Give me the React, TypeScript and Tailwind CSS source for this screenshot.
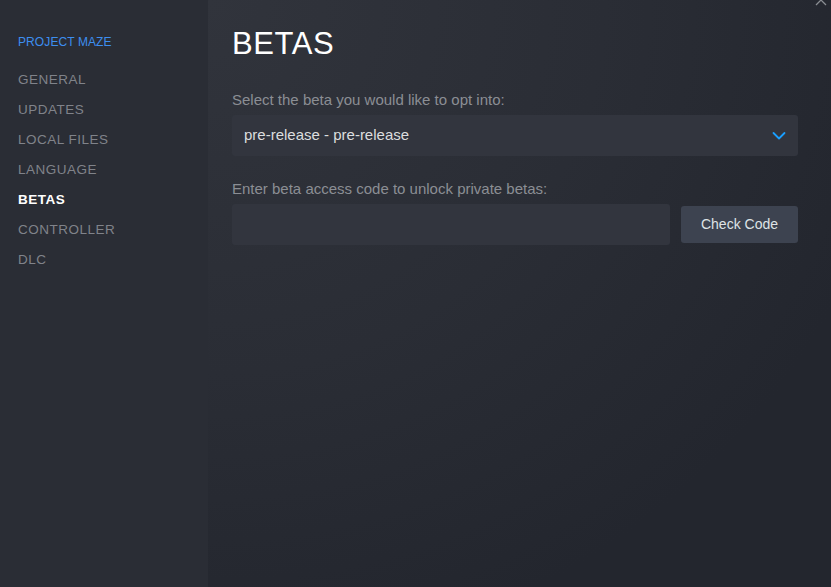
import { useState } from "react";

const sections = [
  "GENERAL",
  "UPDATES",
  "LOCAL FILES",
  "LANGUAGE",
  "BETAS",
  "CONTROLLER",
  "DLC",
];

function Chevron() {
  return (
    <svg width="14" height="14" viewBox="0 0 14 14" fill="none">
      <path
        d="M1.5 4 L7 9.5 L12.5 4"
        stroke="#1a9fff"
        strokeWidth="1.8"
        strokeLinecap="round"
        strokeLinejoin="round"
      />
    </svg>
  );
}

export default function App() {
  const [active, setActive] = useState("BETAS");
  const [code, setCode] = useState("");

  return (
    <div className="flex h-[587px] w-[831px] overflow-hidden font-['Liberation_Sans',sans-serif]">
      {/* sidebar */}
      <div className="w-[208px] shrink-0 bg-[#2a2d35] pl-[18px] pt-[34px]">
        <div className="text-[12px] leading-4 text-[#3d8ef0] tracking-[0.1px]">
          PROJECT MAZE
        </div>
        <div className="mt-[15px] flex flex-col">
          {sections.map((s) => (
            <button
              key={s}
              onClick={() => setActive(s)}
              className={`h-[30px] text-left text-[13.5px] tracking-[0.5px] ${
                active === s ? "font-bold text-white" : "text-[#80838a]"
              }`}
            >
              {s}
            </button>
          ))}
        </div>
      </div>

      {/* main */}
      <div className="relative flex-1 bg-[radial-gradient(ellipse_at_top_left,#31343c_0%,#2a2d35_45%,#23262e_80%)] pl-[24px] pr-[33px] pt-[26px]">
        <button className="absolute right-[4px] top-[-6px]">
          <svg width="12" height="12" viewBox="0 0 12 12">
            <path d="M1 1 L11 11 M11 1 L1 11" stroke="#8a8d92" strokeWidth="1.3" />
          </svg>
        </button>

        <h1 className="text-[31px] leading-9 font-light tracking-[0.6px] text-white">
          BETAS
        </h1>

        <div className="mt-[28px] text-[15px] leading-5 text-[#8b8e94]">
          Select the beta you would like to opt into:
        </div>
        <div className="mt-[5px] flex h-[41px] items-center justify-between rounded-[3px] bg-[#32353e] pl-[12px] pr-[12px]">
          <span className="text-[15px] text-[#dcdedf]">
            pre-release - pre-release
          </span>
          <Chevron />
        </div>

        <div className="mt-[23px] text-[15px] leading-5 text-[#8b8e94]">
          Enter beta access code to unlock private betas:
        </div>
        <div className="mt-[5px] flex items-center gap-[11px]">
          <input
            value={code}
            onChange={(e) => setCode(e.target.value)}
            className="h-[41px] flex-1 rounded-[3px] bg-[#32353e] px-3 text-[15px] text-[#dcdedf] outline-none"
          />
          <button className="h-[37px] w-[117px] rounded-[3px] bg-[#3d4350] text-[14px] text-[#dfe3e6]">
            Check Code
          </button>
        </div>
      </div>
    </div>
  );
}
